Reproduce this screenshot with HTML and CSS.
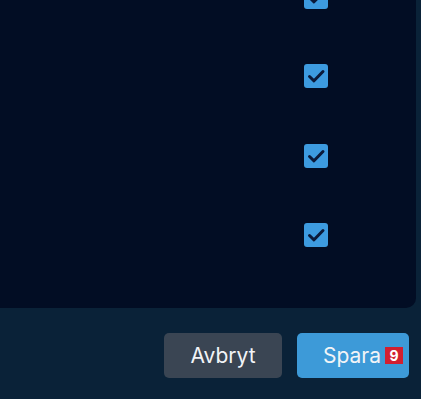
FILE: index.html
```html
<!DOCTYPE html>
<html>
<head>
<meta charset="utf-8">
<link rel="stylesheet" href="styles.css">
</head>
<body>
<div class="panel">
  <ul class="list">
    <li class="row"><span class="check"><svg viewBox="0 0 24 24" width="24" height="24"><path d="M5.5 12.5l4.5 4.3 9-9.3" fill="none" stroke="#0b1a3a" stroke-width="3" stroke-linecap="round" stroke-linejoin="round"/></svg></span></li>
    <li class="row"><span class="check"><svg viewBox="0 0 24 24" width="24" height="24"><path d="M5.5 12.5l4.5 4.3 9-9.3" fill="none" stroke="#0b1a3a" stroke-width="3" stroke-linecap="round" stroke-linejoin="round"/></svg></span></li>
    <li class="row"><span class="check"><svg viewBox="0 0 24 24" width="24" height="24"><path d="M5.5 12.5l4.5 4.3 9-9.3" fill="none" stroke="#0b1a3a" stroke-width="3" stroke-linecap="round" stroke-linejoin="round"/></svg></span></li>
    <li class="row"><span class="check"><svg viewBox="0 0 24 24" width="24" height="24"><path d="M5.5 12.5l4.5 4.3 9-9.3" fill="none" stroke="#0b1a3a" stroke-width="3" stroke-linecap="round" stroke-linejoin="round"/></svg></span></li>
  </ul>
</div>
<div class="footer">
  <button class="btn cancel">Avbryt</button>
  <button class="btn save">Spara<span class="badge">9</span></button>
</div>
</body>
</html>
```
FILE: styles.css
```css
html, body {
  margin: 0;
  padding: 0;
  background: #0a2238;
  width: 421px;
  height: 399px;
  overflow: hidden;
  font-family: Inter, "Liberation Sans", Arial, sans-serif;
}
.panel {
  width: 416px;
  height: 308px;
  background: #020d24;
  border-radius: 0 0 10px 0;
  overflow: hidden;
}
.list {
  list-style: none;
  margin: -43px 0 0 0;
  padding: 0;
}
.row {
  height: 79.5px;
  display: flex;
  align-items: center;
  padding-left: 304px;
}
.check {
  width: 24px;
  height: 24px;
  border-radius: 3px;
  background: #3d9be0;
  display: block;
}
.check svg { display: block; }
.footer {
  display: flex;
  justify-content: flex-end;
  gap: 15px;
  padding: 25px 12px 0 0;
}
.btn {
  height: 45px;
  border: none;
  border-radius: 5px;
  color: #f2f4f7;
  font-family: Inter, "Liberation Sans", Arial, sans-serif;
  font-size: 21px;
  display: flex;
  align-items: center;
  padding: 0;
}
.cancel {
  width: 118px;
  background: #3a4553;
  justify-content: center;
}
.save {
  width: 112px;
  background: #3d9ad8;
  padding-left: 26px;
}
.badge {
  display: inline-flex;
  align-items: center;
  justify-content: center;
  width: 18px;
  height: 17px;
  margin-left: 4px;
  background: #d21f30;
  color: #fff;
  font-size: 14px;
  font-weight: bold;
}
```
